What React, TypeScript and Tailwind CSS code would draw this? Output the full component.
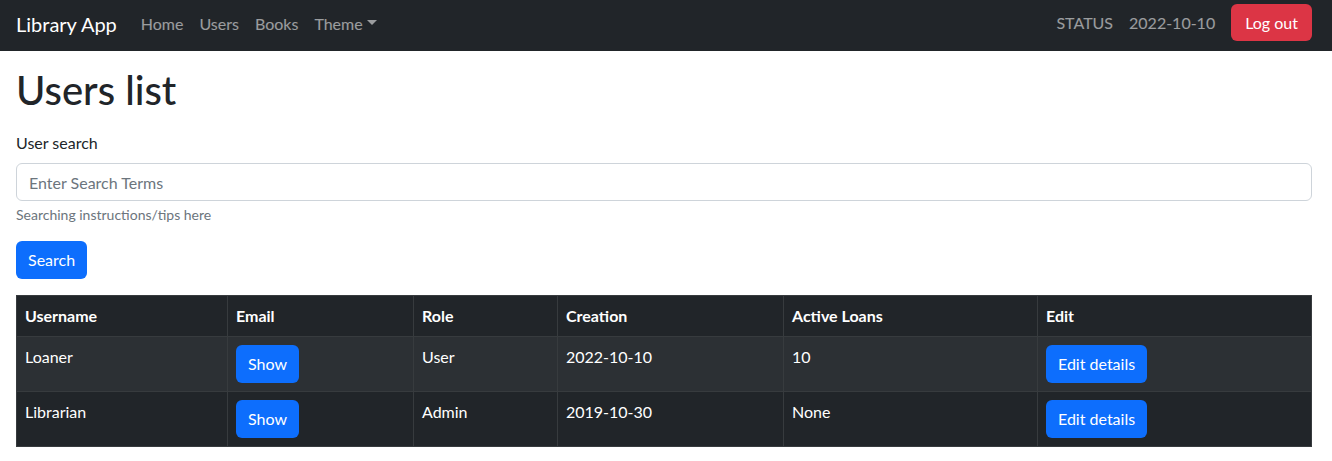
import React from 'react';

interface UserRow {
  username: string;
  role: string;
  creation: string;
  loans: string;
}

const users: UserRow[] = [
  { username: 'Loaner', role: 'User', creation: '2022-10-10', loans: '10' },
  { username: 'Librarian', role: 'Admin', creation: '2019-10-30', loans: 'None' },
];

const font = { fontFamily: '"Segoe UI", Lato, "Noto Sans", sans-serif' };

function BlueButton({ children }: { children: React.ReactNode }) {
  return (
    <button className="bg-[#0d6efd] text-white text-[16px] leading-[24px] px-3 py-[7px] rounded-[6px]">
      {children}
    </button>
  );
}

export default function App() {
  return (
    <div className="min-h-screen bg-white text-[#212529]" style={font}>
      {/* Navbar */}
      <nav className="h-[51px] bg-[#212529] flex items-center pl-4 pr-[20px]">
        <span className="text-white text-[20px] leading-[30px] mr-4 -mt-[4px]">Library App</span>
        <div className="flex items-center text-[16px] leading-[24px] text-white/55 -mt-[4px]">
          <a className="px-2">Home</a>
          <a className="px-2">Users</a>
          <a className="px-2">Books</a>
          <a className="px-2 flex items-center">
            Theme
            <span className="ml-[4px] -mt-[3px] inline-block w-0 h-0 border-t-[5px] border-x-[5px] border-b-0 border-x-transparent border-t-current" />
          </a>
        </div>
        <div className="ml-auto flex items-center text-[16px] leading-[24px] text-white/55 -mt-[6px]">
          <span className="px-2">STATUS</span>
          <span className="px-2">2022-10-10</span>
          <button className="ml-2 bg-[#dc3545] text-white px-[14px] py-[6px] rounded-[6px] leading-[25px]">
            Log out
          </button>
        </div>
      </nav>

      {/* Content */}
      <main className="pl-4 pr-[20px]">
        <h1 className="text-[40px] leading-[48px] font-medium mt-[15px] mb-[17px]">Users list</h1>

        <label className="block text-[16px] leading-[24px] mb-2">User search</label>
        <input
          className="block w-full h-[38px] border border-[#ced4da] rounded-[6px] px-3 text-[16px] placeholder:text-[#6c757d] outline-none"
          placeholder="Enter Search Terms"
        />
        <div className="text-[14px] leading-[21px] text-[#6c757d] mt-[3px]">Searching instructions/tips here</div>

        <div className="mt-4 mb-4">
          <button className="bg-[#0d6efd] text-white text-[16px] leading-[24px] px-3 py-[7px] rounded-[6px]">
            Search
          </button>
        </div>

        <table className="w-full border-collapse border border-[#373b3e] text-white text-[16px] leading-[24px] align-top">
          <thead>
            <tr className="bg-[#212529]">
              <th className="w-[211px] text-left font-bold px-2 py-2 border border-[#373b3e]">Username</th>
              <th className="w-[186px] text-left font-bold px-2 py-2 border border-[#373b3e]">Email</th>
              <th className="w-[144px] text-left font-bold px-2 py-2 border border-[#373b3e]">Role</th>
              <th className="w-[226px] text-left font-bold px-2 py-2 border border-[#373b3e]">Creation</th>
              <th className="w-[254px] text-left font-bold px-2 py-2 border border-[#373b3e]">Active Loans</th>
              <th className="text-left font-bold px-2 py-2 border border-[#373b3e]">Edit</th>
            </tr>
          </thead>
          <tbody>
            {users.map((u, i) => (
              <tr key={u.username} className={i % 2 === 0 ? 'bg-[#2c3034]' : 'bg-[#212529]'}>
                <td className="p-2 align-top border border-[#373b3e]">{u.username}</td>
                <td className="p-2 align-top border border-[#373b3e]">
                  <BlueButton>Show</BlueButton>
                </td>
                <td className="p-2 align-top border border-[#373b3e]">{u.role}</td>
                <td className="p-2 align-top border border-[#373b3e]">{u.creation}</td>
                <td className="p-2 align-top border border-[#373b3e]">{u.loans}</td>
                <td className="p-2 align-top border border-[#373b3e]">
                  <BlueButton>Edit details</BlueButton>
                </td>
              </tr>
            ))}
          </tbody>
        </table>
      </main>
    </div>
  );
}
